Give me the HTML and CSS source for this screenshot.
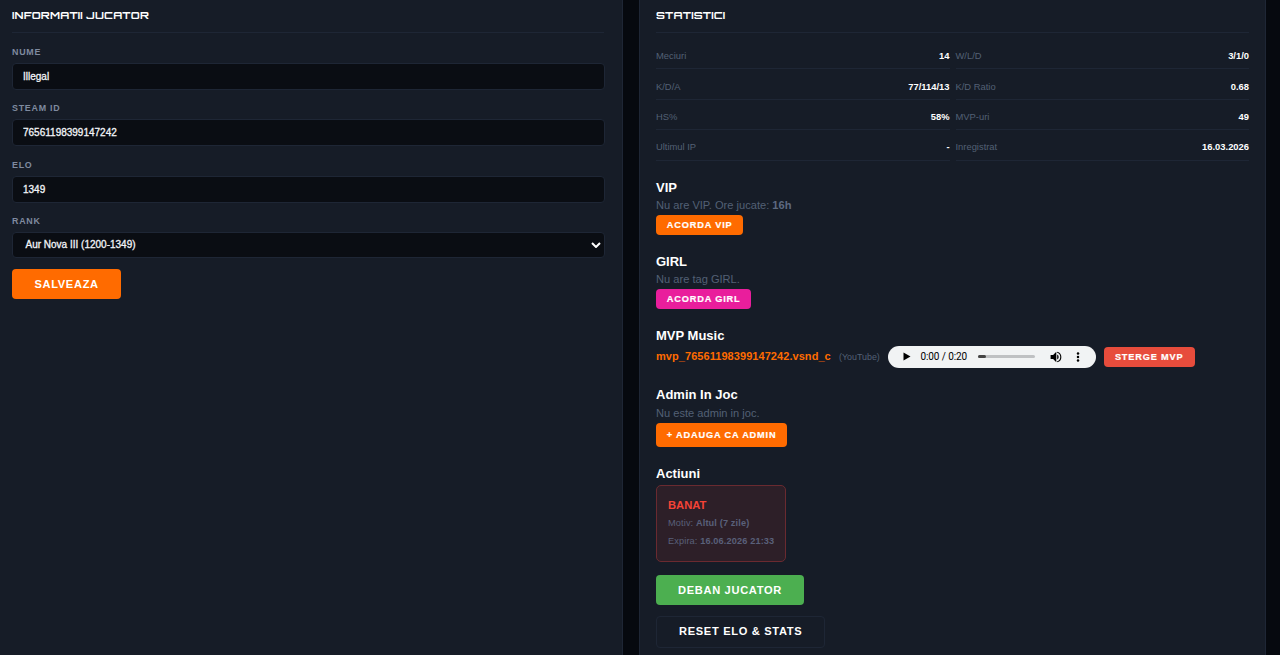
FILE: index.html
```html
<!DOCTYPE html>
<html lang="ro">
<head>
<meta charset="utf-8">
<title>Jucator</title>
<link rel="stylesheet" href="styles.css">
</head>
<body>
<main class="layout">
  <section class="panel panel-info">
    <h2 class="panel-title">INFORMATII JUCATOR</h2>
    <form class="form">
      <label class="field"><span class="label">NUME</span><input class="input" type="text" value="Illegal"></label>
      <label class="field"><span class="label">STEAM ID</span><input class="input" type="text" value="76561198399147242"></label>
      <label class="field"><span class="label">ELO</span><input class="input" type="text" value="1349"></label>
      <div class="field"><span class="label">RANK</span>
        <div class="input select"><span>Aur Nova III (1200-1349)</span>
          <svg width="10" height="6" viewBox="0 0 10 6"><path d="M1 1l4 4 4-4" fill="none" stroke="#fff" stroke-width="2"/></svg>
        </div>
      </div>
      <button class="btn btn-orange" type="button">SALVEAZA</button>
    </form>
  </section>
  <section class="panel panel-stats">
    <h2 class="panel-title">STATISTICI</h2>
    <div class="stats">
      <div class="stat"><span>Meciuri</span><b>14</b></div>
      <div class="stat"><span>W/L/D</span><b>3/1/0</b></div>
      <div class="stat"><span>K/D/A</span><b>77/114/13</b></div>
      <div class="stat"><span>K/D Ratio</span><b>0.68</b></div>
      <div class="stat"><span>HS%</span><b>58%</b></div>
      <div class="stat"><span>MVP-uri</span><b>49</b></div>
      <div class="stat"><span>Ultimul IP</span><b>-</b></div>
      <div class="stat"><span>Inregistrat</span><b>16.03.2026</b></div>
    </div>
    <div class="block">
      <h3 class="heading">VIP</h3>
      <p class="note">Nu are VIP. Ore jucate: <b>16h</b></p>
      <button class="btn-sm btn-orange">ACORDA VIP</button>
    </div>
    <div class="block">
      <h3 class="heading">GIRL</h3>
      <p class="note">Nu are tag GIRL.</p>
      <button class="btn-sm btn-pink">ACORDA GIRL</button>
    </div>
    <div class="block">
      <h3 class="heading">MVP Music</h3>
      <div class="music">
        <b class="track">mvp_76561198399147242.vsnd_c</b>
        <span class="source">(YouTube)</span>
        <div class="player">
          <svg class="play" width="8" height="9" viewBox="0 0 8 9"><path d="M0.5 0.5v8l7-4z"/></svg>
          <span class="time">0:00 / 0:20</span>
          <span class="progress"><span class="played"></span></span>
          <svg class="volume" width="12" height="12" viewBox="0 0 12 12"><path d="M.6 4v4h2.5l3.2 3.2V.8L3.1 4z"/><path d="M7.2 3.6a2.7 2.7 0 0 1 0 4.8z"/><path d="M7.2 1.2a5 5 0 0 1 0 9.6" fill="none" stroke="#000" stroke-width="1.1"/></svg>
          <svg class="more" width="4" height="10" viewBox="0 0 4 10"><circle cx="2" cy="1.4" r="1.25"/><circle cx="2" cy="5" r="1.25"/><circle cx="2" cy="8.6" r="1.25"/></svg>
        </div>
        <button class="btn-sm btn-red">STERGE MVP</button>
      </div>
    </div>
    <div class="block">
      <h3 class="heading">Admin In Joc</h3>
      <p class="note note-admin">Nu este admin in joc.</p>
      <button class="btn-sm btn-admin btn-orange">+ ADAUGA CA ADMIN</button>
    </div>
    <div class="block actions">
      <h3 class="heading">Actiuni</h3>
      <div class="ban">
        <b class="ban-title">BANAT</b>
        <p>Motiv: <b>Altul (7 zile)</b></p>
        <p>Expira: <b>16.06.2026 21:33</b></p>
      </div>
      <button class="btn btn-green">DEBAN JUCATOR</button>
      <button class="btn btn-outline">RESET ELO &amp; STATS</button>
    </div>
  </section>
</main>
</body>
</html>
```
FILE: styles.css
```css
* { box-sizing: border-box; }
body {
  margin: 0;
  height: 655px;
  overflow: hidden;
  background: #06090f;
  color: #fff;
  font-family: "Liberation Sans", Arial, sans-serif;
}
h2, h3, p { margin: 0; }
button { font-family: inherit; border: 0; display: block; padding: 0; color: #fff; font-weight: 700; white-space: nowrap; }
.layout { display: grid; grid-template-columns: 623px 627px; column-gap: 16px; height: 655px; }
.panel { background: #161c27; border-right: 1px solid #1e2635; }
.panel-info { padding: 0 18px 0 12px; }
.panel-stats { padding: 0 16px; border-left: 1px solid #1e2635; }
.panel-title {
  height: 33px;
  padding-top: 6px;
  border-bottom: 1px solid #1e2635;
  font: 700 10.8px/19px Orbitron, "DejaVu Sans", sans-serif;
  letter-spacing: .2px;
}
.form { padding-top: 11px; }
.field { display: block; height: 56.3px; }
.label { display: block; height: 19px; line-height: 16px; font-size: 8.9px; font-weight: 700; letter-spacing: .75px; color: #7f8a9f; }
.input {
  display: block;
  width: 592.5px;
  height: 27px;
  padding: 0 10px;
  border: 1px solid #1e2635;
  border-radius: 4px;
  background: #0a0d13;
  color: #f2f4f8;
  font: 10px "Liberation Sans", Arial, sans-serif;
  -webkit-text-stroke: .3px #f2f4f8;
}
.select { display: flex; align-items: center; justify-content: space-between; height: 26px; padding: 0 2.5px 0 12.5px; }
.btn { height: 30px; padding: 0 22px; border-radius: 4px; font-size: 11.1px; letter-spacing: .68px; }
.btn-orange { background: #ff6b00; }
.btn-pink { background: #e91e9c; }
.btn-red { background: #e74c3c; }
.btn-green { background: #4caf50; }
.btn-sm { height: 20px; padding: 0 10.8px; border-radius: 4px; font-size: 9.2px; letter-spacing: .84px; -webkit-text-stroke: .2px #fff; }
.btn-admin { height: 24px; }
.form .btn { padding: 0 22.4px 1px; }
.stats { display: grid; grid-template-columns: 1fr 1fr; column-gap: 6px; grid-auto-rows: 30.4px; padding-top: 6px; }
.stat { display: flex; justify-content: space-between; padding-top: 9.2px; border-bottom: 1px solid #1e2635; font-size: 9.4px; line-height: 16px; color: #536075; }
.stat b { color: #fff; }
.block { margin-bottom: 18px; }
.stats + .block { margin-top: 18px; }
.heading { font-size: 13px; line-height: 18px; }
.note { font-size: 11.1px; line-height: 17px; height: 18px; color: #536075; }
.note b { color: #5d6980; }
.note-admin { height: 19px; padding-top: 1px; }
.music { display: flex; align-items: center; height: 23px; }
.track { width: 183px; font-size: 11px; letter-spacing: .06px; color: #ff6b00; }
.source { width: 48.5px; padding-top: 1px; font-size: 8.9px; color: #536075; }
.player { display: flex; align-items: center; width: 208px; height: 22px; margin: 1px 8px 0 0; padding-left: 15px; border-radius: 11px; background: #f1f3f4; color: #000; }
.time { width: 57px; margin-left: 10px; font: 10px Roboto, sans-serif; letter-spacing: -.1px; white-space: nowrap; }
.progress { width: 57px; height: 3px; border-radius: 2px; background: #bfc1c3; }
.played { display: block; width: 8px; height: 3px; border-radius: 2px; background: #444; }
.volume { margin-left: 15px; }
.more { margin-left: 14px; }
.music .btn-sm { margin-top: 1px; padding: 0 11.4px; }
.ban { width: 130px; height: 77px; margin: 2px 0 13px; padding: 10px 11px; border: 1px solid #6a2a30; border-radius: 5px; background: #2d1f28; white-space: nowrap; }
.ban-title { display: block; font-size: 11.2px; line-height: 18px; color: #f44336; }
.ban p { font-size: 9.2px; letter-spacing: .13px; line-height: 18px; color: #59607a; }
.btn-outline { height: 32px; margin-top: 11px; padding-bottom: 1px; border: 1px solid #1e2635; background: transparent; }
```
